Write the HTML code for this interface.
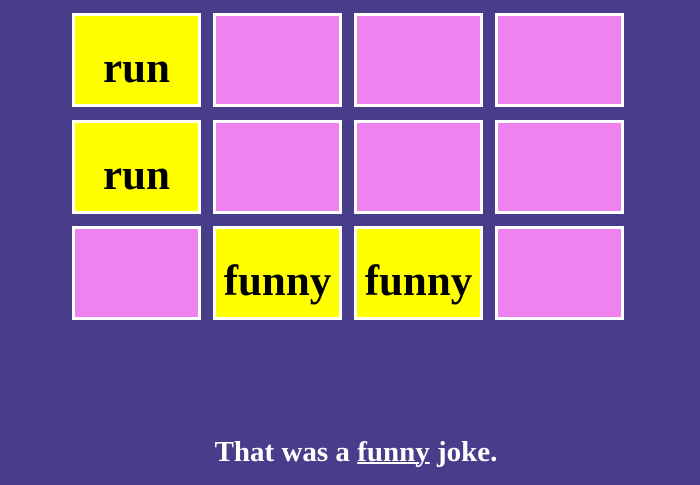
<!DOCTYPE html>
<html><head><style>
html,body{margin:0;padding:0;}
body{width:700px;height:485px;background:#483D8B;position:relative;overflow:hidden;font-family:"Liberation Serif",serif;}
.c{position:absolute;width:123px;height:88px;border:3px solid #fff;background:#EE82EE;}
.y{background:#FFFF00;}
.c span{position:absolute;left:0;right:0;top:32px;text-align:center;font-weight:bold;font-size:43px;line-height:42px;color:#000;}
.msg{position:absolute;left:0;width:712px;top:436px;text-align:center;color:#fff;font-weight:bold;font-size:29px;line-height:32px;}
.msg u{text-decoration-thickness:2px;}
</style></head><body>
<div class="c y" style="left:72px;top:13px"><span>run</span></div>
<div class="c" style="left:213px;top:13px"></div>
<div class="c" style="left:354px;top:13px"></div>
<div class="c" style="left:495px;top:13px"></div>
<div class="c y" style="left:72px;top:120px"><span>run</span></div>
<div class="c" style="left:213px;top:120px"></div>
<div class="c" style="left:354px;top:120px"></div>
<div class="c" style="left:495px;top:120px"></div>
<div class="c" style="left:72px;top:226px"></div>
<div class="c y" style="left:213px;top:226px"><span>funny</span></div>
<div class="c y" style="left:354px;top:226px"><span>funny</span></div>
<div class="c" style="left:495px;top:226px"></div>
<div class="msg">That was a <u>funny</u> joke.</div>
</body></html>
